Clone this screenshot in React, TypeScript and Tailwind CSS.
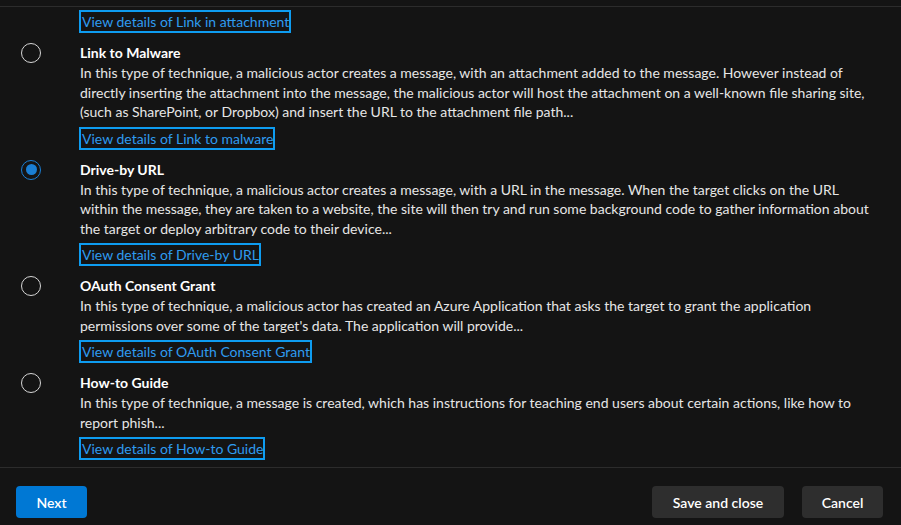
const items = [
  {
    title: "Link to Malware",
    lines: [
      "In this type of technique, a malicious actor creates a message, with an attachment added to the message. However instead of",
      "directly inserting the attachment into the message, the malicious actor will host the attachment on a well-known file sharing site,",
      "(such as SharePoint, or Dropbox) and insert the URL to the attachment file path...",
    ],
    link: "View details of Link to malware",
  },
  {
    title: "Drive-by URL",
    checked: true,
    lines: [
      "In this type of technique, a malicious actor creates a message, with a URL in the message. When the target clicks on the URL",
      "within the message, they are taken to a website, the site will then try and run some background code to gather information about",
      "the target or deploy arbitrary code to their device...",
    ],
    link: "View details of Drive-by URL",
  },
  {
    title: "OAuth Consent Grant",
    lines: [
      "In this type of technique, a malicious actor has created an Azure Application that asks the target to grant the application",
      "permissions over some of the target's data. The application will provide...",
    ],
    link: "View details of OAuth Consent Grant",
  },
  {
    title: "How-to Guide",
    lines: [
      "In this type of technique, a message is created, which has instructions for teaching end users about certain actions, like how to",
      "report phish...",
    ],
    link: "View details of How-to Guide",
  },
];

function DetailLink({ text }: { text: string }) {
  return (
    <span className="-ml-px inline-block border-2 border-[#0e9cf0] pl-[1px] pr-0 text-[14px] leading-[19px] text-[#2f9bef]">
      {text}
    </span>
  );
}

function Radio({ checked }: { checked?: boolean }) {
  return checked ? (
    <div className="flex h-5 w-5 items-center justify-center rounded-full border border-[#1a7fd4]">
      <div className="h-[11px] w-[11px] rounded-full bg-[#1a7fd4]" />
    </div>
  ) : (
    <div className="h-5 w-5 rounded-full border border-[#d6d6d6]" />
  );
}

export default function App() {
  return (
    <div
      className="flex h-[525px] w-[901px] flex-col bg-[#141414] text-[14px] text-[#e6e6e6]"
      style={{ fontFamily: "Lato, 'Noto Sans', sans-serif" }}
    >
      <div className="mt-[6px] h-px bg-[#2c2c2c]" />
      <div className="flex flex-1 flex-col">
        <div className="pl-[80px] pt-[3px]">
          <DetailLink text="View details of Link in attachment" />
        </div>
        {items.map((it) => (
          <div key={it.title} className="mt-[10px] flex">
            <div className="flex w-[80px] justify-start pl-[21px]">
              <Radio checked={it.checked} />
            </div>
            <div className="flex flex-col">
              <div className="font-bold leading-[20px] text-white">{it.title}</div>
              {it.lines.map((l) => (
                <div key={l} className="whitespace-nowrap leading-[19.5px]">
                  {l}
                </div>
              ))}
              <div className="mt-[5px]">
                <DetailLink text={it.link} />
              </div>
            </div>
          </div>
        ))}
      </div>
      <div className="h-px bg-[#2c2c2c]" />
      <div className="flex items-center justify-between pb-[7px] pl-4 pr-[18px] pt-[18px]">
        <button className="h-8 w-[71px] rounded-sm bg-[#0078d4] font-semibold text-white">Next</button>
        <div className="flex gap-[18px]">
          <button className="h-8 w-[132px] rounded-sm bg-[#2e2e2e] font-semibold text-white">Save and close</button>
          <button className="h-8 w-[81px] rounded-sm bg-[#2e2e2e] font-semibold text-white">Cancel</button>
        </div>
      </div>
    </div>
  );
}
